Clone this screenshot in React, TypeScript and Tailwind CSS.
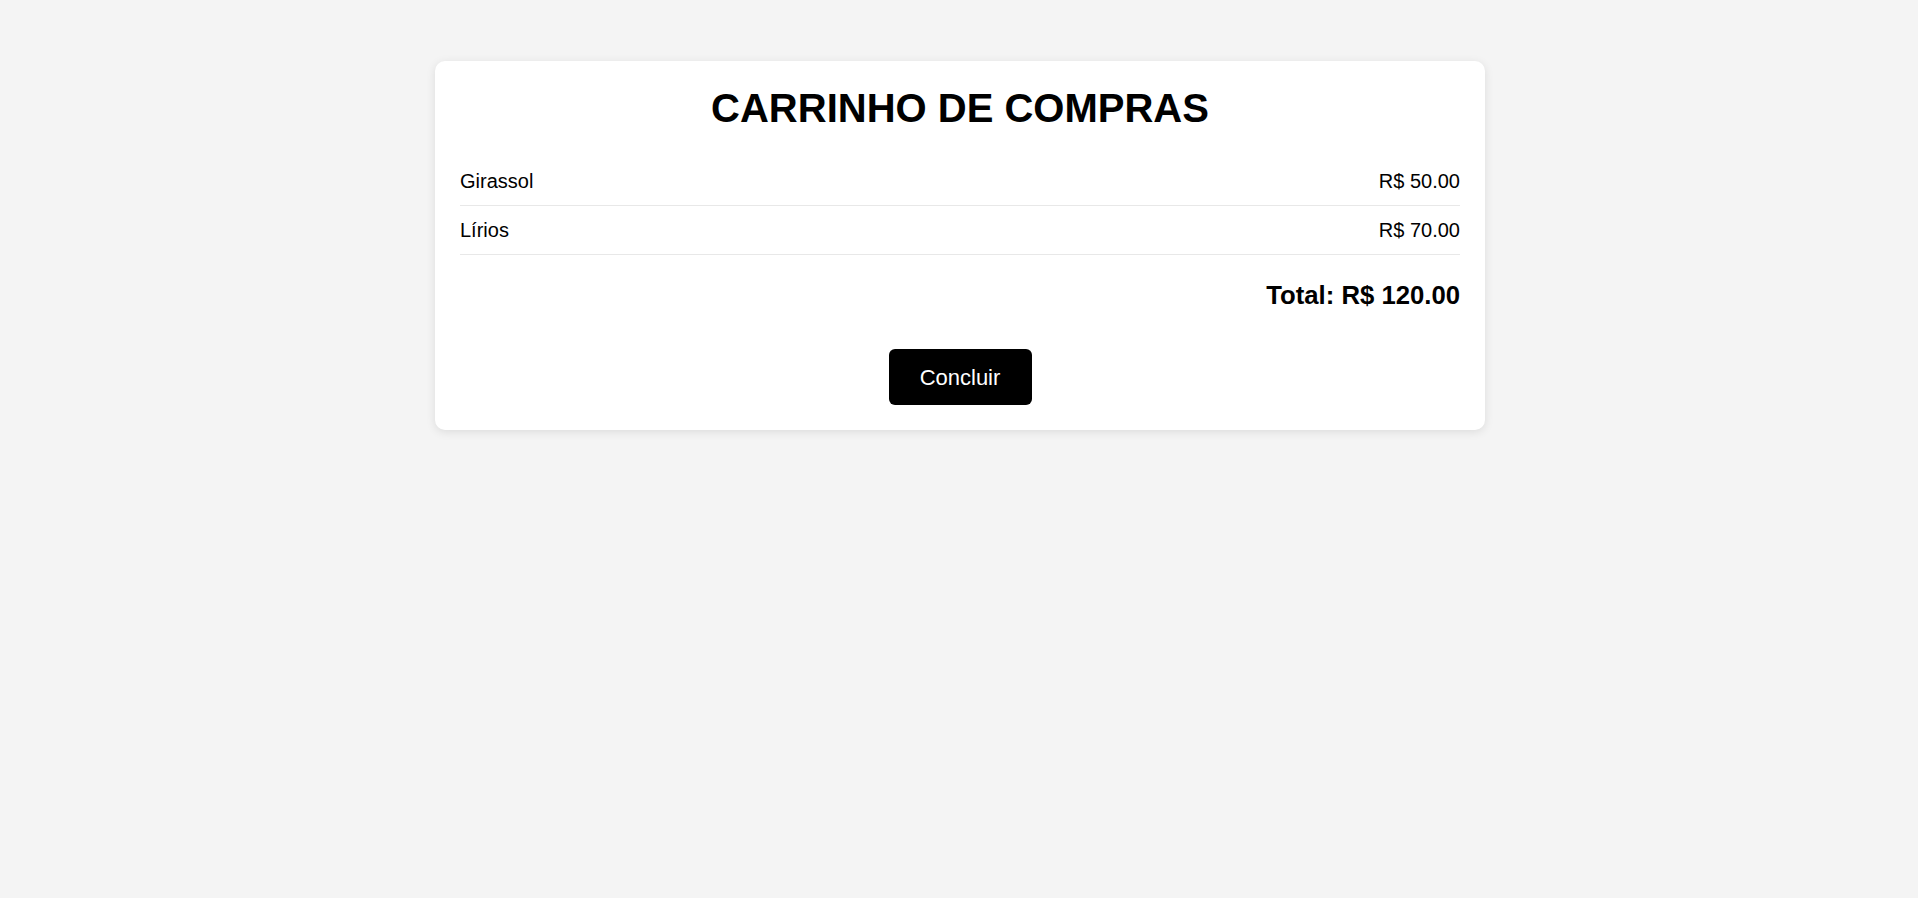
const items = [
  { name: "Girassol", price: 50 },
  { name: "Lírios", price: 70 },
];

export default function App() {
  const total = items.reduce((sum, item) => sum + item.price, 0);

  return (
    <div className="min-h-screen bg-[#f4f4f4] pl-[2px] pt-[61px] font-['Liberation_Sans',Arial,sans-serif] text-black">
      <div className="mx-auto w-[1050px] rounded-[10px] bg-white p-[25px] shadow-[0_2px_10px_rgba(0,0,0,0.1)]">
        <h1 className="mb-[27px] text-center text-[40px] font-bold leading-[44px]">CARRINHO DE COMPRAS</h1>

        <div>
          {items.map((item) => (
            <div key={item.name} className="flex items-center justify-between border-b border-[#e8e8e8] py-[12.5px] text-[20px] leading-[23px]">
              <span>{item.name}</span>
              <span>R$ {item.price.toFixed(2)}</span>
            </div>
          ))}
        </div>

        <div className="mt-[26px] text-right text-[25.7px] font-bold leading-[29px]">
          Total: R$ {total.toFixed(2)}
        </div>

        <div className="mt-[39px] flex justify-center">
          <button className="h-[56px] w-[143px] rounded-[6px] bg-black text-[22px] text-white">Concluir</button>
        </div>
      </div>
    </div>
  );
}
